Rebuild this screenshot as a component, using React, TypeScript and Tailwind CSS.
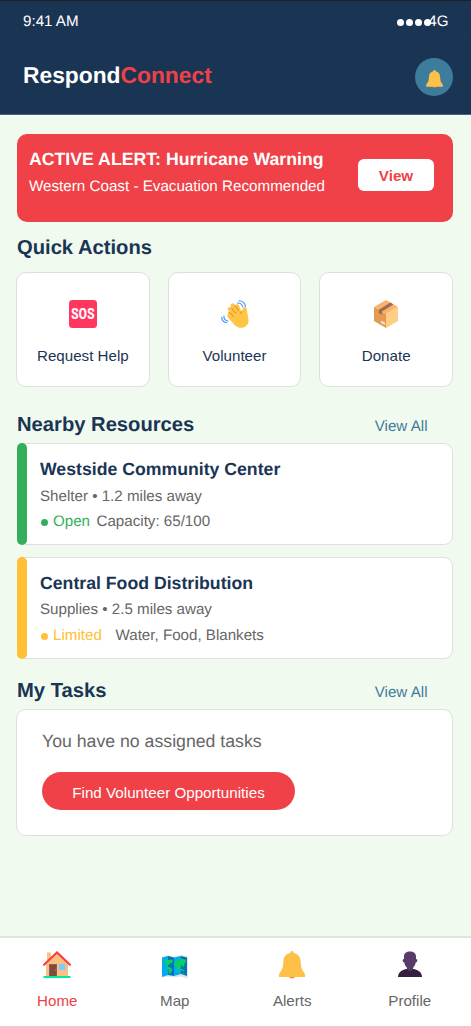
import type { ReactNode } from "react";

function Bell({ className }: { className: string }) {
  return (
    <svg viewBox="0 0 26 28" className={className}>
      <path d="M9.4 25h7.2c-.7 3.200-6.500 3.200-7.200 0Z" fill="#ff822d" />
      <path
        d="M13 0c1.200 0 1.800.9 1.800 2.100 4.200.8 6.500 3.800 6.800 8 .4 6 1 8.600 3.100 10.900.8.9 1.300 2 1.300 3.300V26H0v-1.700C0 23 .5 21.900 1.300 21c2.100-2.300 2.700-4.900 3.100-10.900.3-4.200 2.600-7.200 6.800-8C11.200.9 11.800 0 13 0Z"
        fill="#ffc048"
      />
    </svg>
  );
}

function Sos() {
  return (
    <svg viewBox="0 0 28 28" className="h-7 w-7">
      <rect width="28" height="28" rx="3.500" fill="#ff375f" />
      <text
        transform="translate(14 19) scale(.84 1)"
        textAnchor="middle"
        fill="#fff"
        stroke="#fff"
        strokeWidth=".2"
        fontFamily="Roboto, sans-serif"
        fontWeight="700"
        fontSize="14"
        letterSpacing=".4"
      >
        SOS
      </text>
    </svg>
  );
}

function Wave() {
  return (
    <svg viewBox="0 0 28 28" className="h-7 w-7">
      <g fill="none" stroke="#ffc544" strokeLinecap="round">
        <path d="m19 17-7.500-11.600" strokeWidth="4" />
        <path d="M16 18 8.700 9" strokeWidth="4" />
        <path d="m14 20-5.300-6.500" strokeWidth="3.800" />
        <path d="M20 15 16.200 6" strokeWidth="3.600" />
      </g>
      <path
        d="M9 15.500 20.700 11l1.500-3.100c.8-1.600 3.700-.9 3.700 1.200 0 3.700 1.700 8.100 1.600 11.700-.1 4.300-3.400 7-7 7-4.100 0-7.200-2.900-9.600-5.900L6.700 17c-1.300-1.800.9-3.600 2.300-1.500Z"
        fill="#ffc544"
      />
      <g fill="none" stroke="#df8528" strokeWidth="1" strokeLinecap="round">
        <path d="m13.700 5 4 6M10.400 8l4.400 5.500M8.600 12.200l3.700 4.300M20.800 11.500l-1.500 2.100" />
      </g>
      <g fill="none" stroke="#438ef5" strokeWidth="1.100" strokeLinecap="round">
        <path d="M16.500 3c2.500-.2 4.800 1.600 5.200 4M18 .8c3.500-.1 6.300 2.400 6.400 5.700M2.900 16c-.3 2.700 1.500 4.800 4 5M.8 17.200c-.2 3.300 2 5.500 5 5.600" />
      </g>
    </svg>
  );
}

function Package() {
  return (
    <svg viewBox="0 0 24 28" className="h-7 w-6">
      <path d="m12 0 12 7-12 7L0 7Z" fill="#f7b46b" />
      <path d="m0 7 12 7v14L0 21Z" fill="#e59a50" />
      <path d="m12 14 12-7v14l-12 7Z" fill="#ffcd83" />
      <path d="m4.800 9.800 11.600-7.200 3 1.800L8 11.600v3.200l-3.200-1.700Z" fill="#a56a55" />
      <path d="m7 20.400 4 2v2.500l-4-2Z" fill="#e8e5e4" />
    </svg>
  );
}

function House() {
  return (
    <svg viewBox="0 0 28 28" className="h-7 w-7">
      <path d="M4 1.500h4v8H4ZM3 12 14 2l11 10v13H3Z" fill="#f8c183" />
      <path d="M6 13h8v12H6Z" fill="#9a5e4b" />
      <path d="M6.800 14h6.400v11H6.800Z" fill="#804b3d" />
      <circle cx="12.300" cy="19" r=".6" fill="#d28860" />
      <path d="M16 13h6v6h-6Z" fill="#7accff" />
      <path d="M1 13.800 14 1.500l13 12.300" fill="none" stroke="#ff3b3b" strokeWidth="2.100" strokeLinecap="round" />
      <path d="M.5 25h27v2H.5Z" fill="#00eb9b" />
    </svg>
  );
}

function WorldMap() {
  return (
    <svg viewBox="0 0 28 24" className="h-6 w-7">
      <path d="m1 2 6-2 6 2 7-2 7 1.500-.5 22-6.500-2-7 1-6-1-6 1Z" fill="#e2e3e5" />
      <path d="m1 2.500 6-1.500v19l-6 2ZM13 2.500 20 1v18l-7 2Z" fill="#06a9ef" />
      <path d="m7 1 6 1.500V21l-6-1ZM20 1l6 1.500V21l-6-2Z" fill="#0573b5" />
      <path
        d="m2.500 6.500 3-2 2 .5 4-.5.5 2-1.500 2L9 8l-1 2-1.500.5 1 1.500 2 .5 2 2-1 2-1.500 3-1.500-2v-3l-2-2.500L5 10 4 7.500ZM14 7l3-2.500 3.500-1L25 5l-.5 3-1.500 1 .5 2-1.500 1-1-2-1.500 1-.5 3.500-1.500 2-1.500-2-.5-3-2-.5-1-2Z"
        fill="#08cd68"
      />
      <path d="m20 14 3.500 1-.5 1.500-3-1ZM20.500 18l3 .5v1l-3-1Z" fill="#08cd68" />
    </svg>
  );
}

function Person() {
  return (
    <svg viewBox="0 0 24 27" className="h-[27px] w-6">
      <path d="M0 26c.2-5 4-7 8-8h8c4 1 7.800 3 8 8Z" fill="#36203f" />
      <path
        d="M6 5.500C6 2 8.500.5 12 .5s6 1.500 6 5v2.500c1.800-.4 1.800 3.500-.2 3.300-.4 2.500-1.500 4.500-2.800 5.500V18l-3 2.500L9 18v-1.200c-1.300-1-2.400-3-2.800-5.500C4.200 11.500 4.200 7.600 6 8Z"
        fill="#583b68"
      />
    </svg>
  );
}

function Action({ icon, label }: { icon: ReactNode; label: string }) {
  return (
    <button className="flex h-[115px] flex-1 flex-col items-center rounded-[10px] border border-[#dedfde] bg-white pt-[27px] text-[15.15px] leading-5 text-[#1a3554]">
      <span className="flex h-7 items-center">{icon}</span>
      <span className="mt-[18px]">{label}</span>
    </button>
  );
}

function SectionHeader({ title, link }: { title: string; link?: boolean }) {
  return (
    <div className="flex items-center justify-between pr-[25.500px]">
      <h2 className="text-[20.2px] leading-5 font-bold text-[#1a3554]">{title}</h2>
      {link && <a className="mt-[4px] -mb-px text-[15.15px] leading-5 text-[#3e7c9b]">View All</a>}
    </div>
  );
}

function Resource({
  name,
  info,
  status,
  detail,
  open,
}: {
  name: string;
  info: string;
  status: string;
  detail: string;
  open?: boolean;
}) {
  return (
    <article className="flex h-[102px] rounded-[9px] border border-[#dedfde] bg-white text-[15.15px] leading-5 text-[#666]">
      <div className={`-my-px -ml-px w-[10px] shrink-0 rounded-[5px] ${open ? "bg-[#35ae5b]" : "bg-[#ffc035]"}`} />
      <div className="pt-[15px] pl-[13px]">
        <h3 className="text-[17.68px] leading-5 font-bold text-[#1a3554]">{name}</h3>
        <p className={open ? "mt-2" : "mt-[7px]"}>{info}</p>
        <div className={`flex items-center ${open ? "mt-[5px] text-[#35ae5b]" : "mt-[6px] text-[#ffc035]"}`}>
          <span className="mt-px ml-px h-[7px] w-[7px] rounded-full bg-current" />
          <span className={open ? "ml-[5px] w-[43.500px]" : "ml-[5px] w-[62.500px]"}>{status}</span>
          <span className="text-[#666]">{detail}</span>
        </div>
      </div>
    </article>
  );
}

function NavItem({ icon, label, active }: { icon: ReactNode; label: string; active?: boolean }) {
  return (
    <button className={`flex w-1/4 flex-col items-center text-[15.15px] leading-5 ${active ? "text-[#ef4147]" : "text-[#666]"}`}>
      <span className="flex h-[29px] items-center">{icon}</span>
      <span className="mt-3">{label}</span>
    </button>
  );
}

export default function App() {
  return (
    <div className="flex h-[1026px] w-[471px] flex-col overflow-hidden bg-[#f0faef] font-['Liberation_Sans',Arial,sans-serif] [text-rendering:geometricPrecision]">
      <header className="h-[115px] shrink-0 border-t border-b border-t-[#211e20] border-b-[#49637c] bg-[#1a3554] text-white">
        <div className="flex h-[37px] items-center justify-between border-b border-[#1d3857] pt-[5px] pr-[22.500px] pl-[23px] text-[15.15px] leading-5">
          <span>9:41 AM</span>
          <div className="flex items-center">
            <div className="-mr-[3px] flex gap-[2px] pt-px">
              <i className="h-[7px] w-[7px] rounded-full bg-white" />
              <i className="h-[7px] w-[7px] rounded-full bg-white" />
              <i className="h-[7px] w-[7px] rounded-full bg-white" />
              <i className="h-[7px] w-[7px] rounded-full bg-white" />
            </div>
            <span>4G</span>
          </div>
        </div>
        <div className="flex h-[76px] items-center justify-between pr-[18px] pl-[23px]">
          <h1 className="-mt-[2px] text-[22.8px] leading-6 font-bold">
            Respond<span className="text-[#ef4147]">Connect</span>
          </h1>
          <button className="mt-[2px] flex h-[38px] w-[38px] items-center justify-center rounded-full bg-[#3e7c9b] pt-[3px]">
            <Bell className="h-[18px] w-[17px]" />
          </button>
        </div>
      </header>

      <main className="flex-1 pt-[19px] pr-[18px] pl-[17px]">
        <section className="flex h-[88px] items-start justify-between rounded-[10px] bg-[#ef4147] pt-[15px] pr-[19px] pl-3 text-[15.2px] leading-5 text-white">
          <div>
            <h2 className="text-[17.7px] leading-5 font-bold">ACTIVE ALERT: Hurricane Warning</h2>
            <p className="mt-2">Western Coast - Evacuation Recommended</p>
          </div>
          <button className="mt-[10px] flex h-8 w-[76px] items-center justify-center rounded-[6px] bg-white pt-px font-bold text-[#ef4147]">
            View
          </button>
        </section>

        <div className="mt-4">
          <SectionHeader title="Quick Actions" />
        </div>
        <div className="-ml-px mt-[14px] flex gap-[18px]">
          <Action icon={<Sos />} label="Request Help" />
          <Action icon={<Wave />} label="Volunteer" />
          <Action icon={<Package />} label="Donate" />
        </div>

        <div className="mt-[26px]">
          <SectionHeader title="Nearby Resources" link />
        </div>
        <div className="mt-[7px] flex flex-col gap-3">
          <Resource name="Westside Community Center" info="Shelter • 1.2 miles away" status="Open" detail="Capacity: 65/100" open />
          <Resource name="Central Food Distribution" info="Supplies • 2.5 miles away" status="Limited" detail="Water, Food, Blankets" />
        </div>

        <div className="mt-5">
          <SectionHeader title="My Tasks" link />
        </div>
        <section className="-ml-px mt-[7px] h-[127px] rounded-[10px] border border-[#dedfde] bg-white pt-[21px] pl-[25px]">
          <p className="text-[17.7px] leading-5 text-[#666]">You have no assigned tasks</p>
          <button className="mt-[21px] flex h-[38px] w-[253px] items-center justify-center rounded-full bg-[#ef4147] pt-[3px] text-[15.2px] leading-5 text-white">
            Find Volunteer Opportunities
          </button>
        </section>
      </main>

      <nav className="flex h-[90px] shrink-0 border-t-2 border-[#dfe5df] bg-white pt-[12px] pr-[2.500px]">
        <div className="-ml-[1.500px] flex flex-1">
          <NavItem icon={<House />} label="Home" active />
          <NavItem icon={<span className="pt-1"><WorldMap /></span>} label="Map" />
          <NavItem icon={<Bell className="h-7 w-[26px]" />} label="Alerts" />
          <NavItem icon={<Person />} label="Profile" />
        </div>
      </nav>
    </div>
  );
}
